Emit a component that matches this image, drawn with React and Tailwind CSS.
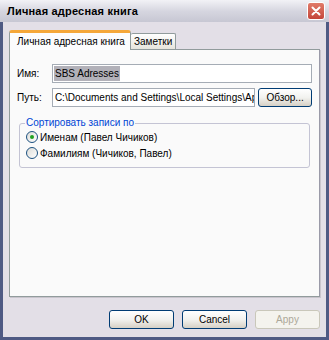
import React from "react";

const font = { fontFamily: '"Liberation Sans", Arial, sans-serif' };

function Radio({ checked, label }) {
  return (
    <div className="flex h-[16px] items-center">
      <span className="flex h-[12px] w-[12px] items-center justify-center rounded-full border border-[#1c5180] bg-gradient-to-br from-[#dcdcd8] to-white">
        {checked && <span className="h-[4px] w-[4px] rounded-full bg-[#21a121]" />}
      </span>
      <span className="ml-[2px] text-[10px] text-black">{label}</span>
    </div>
  );
}

function Button({ children, disabled }) {
  return (
    <button
      className={
        disabled
          ? "h-[19px] w-[65px] rounded-[3px] border border-[#c9c7ba] bg-[#f4f3ee] text-[10px] text-[#aca899]"
          : "h-[19px] w-[65px] rounded-[3px] border border-[#003c74] bg-gradient-to-b from-white via-[#f2f2ef] to-[#d6d0c5] text-[10px] text-black"
      }
    >
      {children}
    </button>
  );
}

export default function App() {
  return (
    <div className="flex h-[340px] w-[329px] flex-col bg-[#e3dfe7] select-none" style={font}>
      {/* title bar */}
      <div className="flex h-[23px] items-center justify-between bg-gradient-to-b from-[#f2f2f6] via-[#d6d6e0] to-[#c7c7d3] pl-[7px] pr-[4px]">
        <span className="text-[11px] font-bold tracking-[0.2px] text-black">Личная адресная книга</span>
        <span className="flex h-[18px] w-[18px] items-center justify-center rounded-[3px] border border-white bg-gradient-to-b from-[#e07b6a] to-[#c4453a]">
          <svg width="10" height="10" viewBox="0 0 10 10">
            <path d="M1.5 1.5 L8.5 8.5 M8.5 1.5 L1.5 8.5" stroke="white" strokeWidth="2" strokeLinecap="round" />
          </svg>
        </span>
      </div>

      {/* body */}
      <div className="flex flex-1 flex-col border-x-[3px] border-b-[3px] border-[#4f5a84] px-[6px] pb-[8px]">
        {/* tabs */}
        <div className="mt-[8px] flex items-end">
          <div className="relative z-10 -mb-px flex h-[20px] w-[122px] items-center rounded-t-[3px] border-x border-t-[3px] border-x-[#919b9c] border-t-[#f5a73a] bg-[#fcfcfe] pl-[7px] text-[10px] text-black">
            Личная адресная книга
          </div>
          <div className="flex h-[16px] w-[45px] items-center rounded-t-[2px] border-r border-t border-[#919b9c] bg-gradient-to-b from-white to-[#e6e4dc] pl-[3px] text-[10px] text-black">
            Заметки
          </div>
        </div>

        {/* panel */}
        <div className="flex h-[248px] flex-col border border-[#919b9c] border-r-[#9a9aa8] bg-[#fafafa] px-[7px] pt-[14px] shadow-[1px_1px_0_#c8c4cc]">
          <div className="flex items-center">
            <span className="w-[35px] text-[10px] text-black">Имя:</span>
            <div className="flex h-[19px] w-[260px] items-center border border-[#a5acb5] bg-white pl-[1px]">
              <span className="bg-[#b2b1b9] px-[1px] text-[10px] text-black">SBS Adresses</span>
            </div>
          </div>
          <div className="mt-[5px] flex items-center">
            <span className="w-[35px] text-[10px] text-black">Путь:</span>
            <div className="flex h-[19px] w-[204px] items-center overflow-hidden whitespace-nowrap border border-[#a5acb5] bg-white pl-[2px] text-[10px] text-black">
              <span>C:\Documents and Settings\Local Settings\Ap</span>
            </div>
            <button className="ml-[3px] h-[19px] w-[54px] rounded-[3px] border border-[#003c74] bg-gradient-to-b from-white via-[#f2f2ef] to-[#d6d0c5] text-[10px] text-black">
              Обзор...
            </button>
          </div>

          <fieldset className="mx-[2px] mt-[10px] h-[51px] rounded-[3px] border border-[#c4c4d4] px-[6px] pb-[2px]">
            <legend className="ml-[-1px] px-[1px] text-[10px] leading-[12px] text-[#0046d5]">Сортировать записи по</legend>
            <Radio checked label="Именам (Павел Чичиков)" />
            <Radio label="Фамилиям (Чичиков, Павел)" />
          </fieldset>
        </div>

        {/* buttons */}
        <div className="mt-[13px] flex justify-end gap-[8px]">
          <Button>OK</Button>
          <Button>Cancel</Button>
          <Button disabled>Appy</Button>
        </div>
      </div>
    </div>
  );
}
